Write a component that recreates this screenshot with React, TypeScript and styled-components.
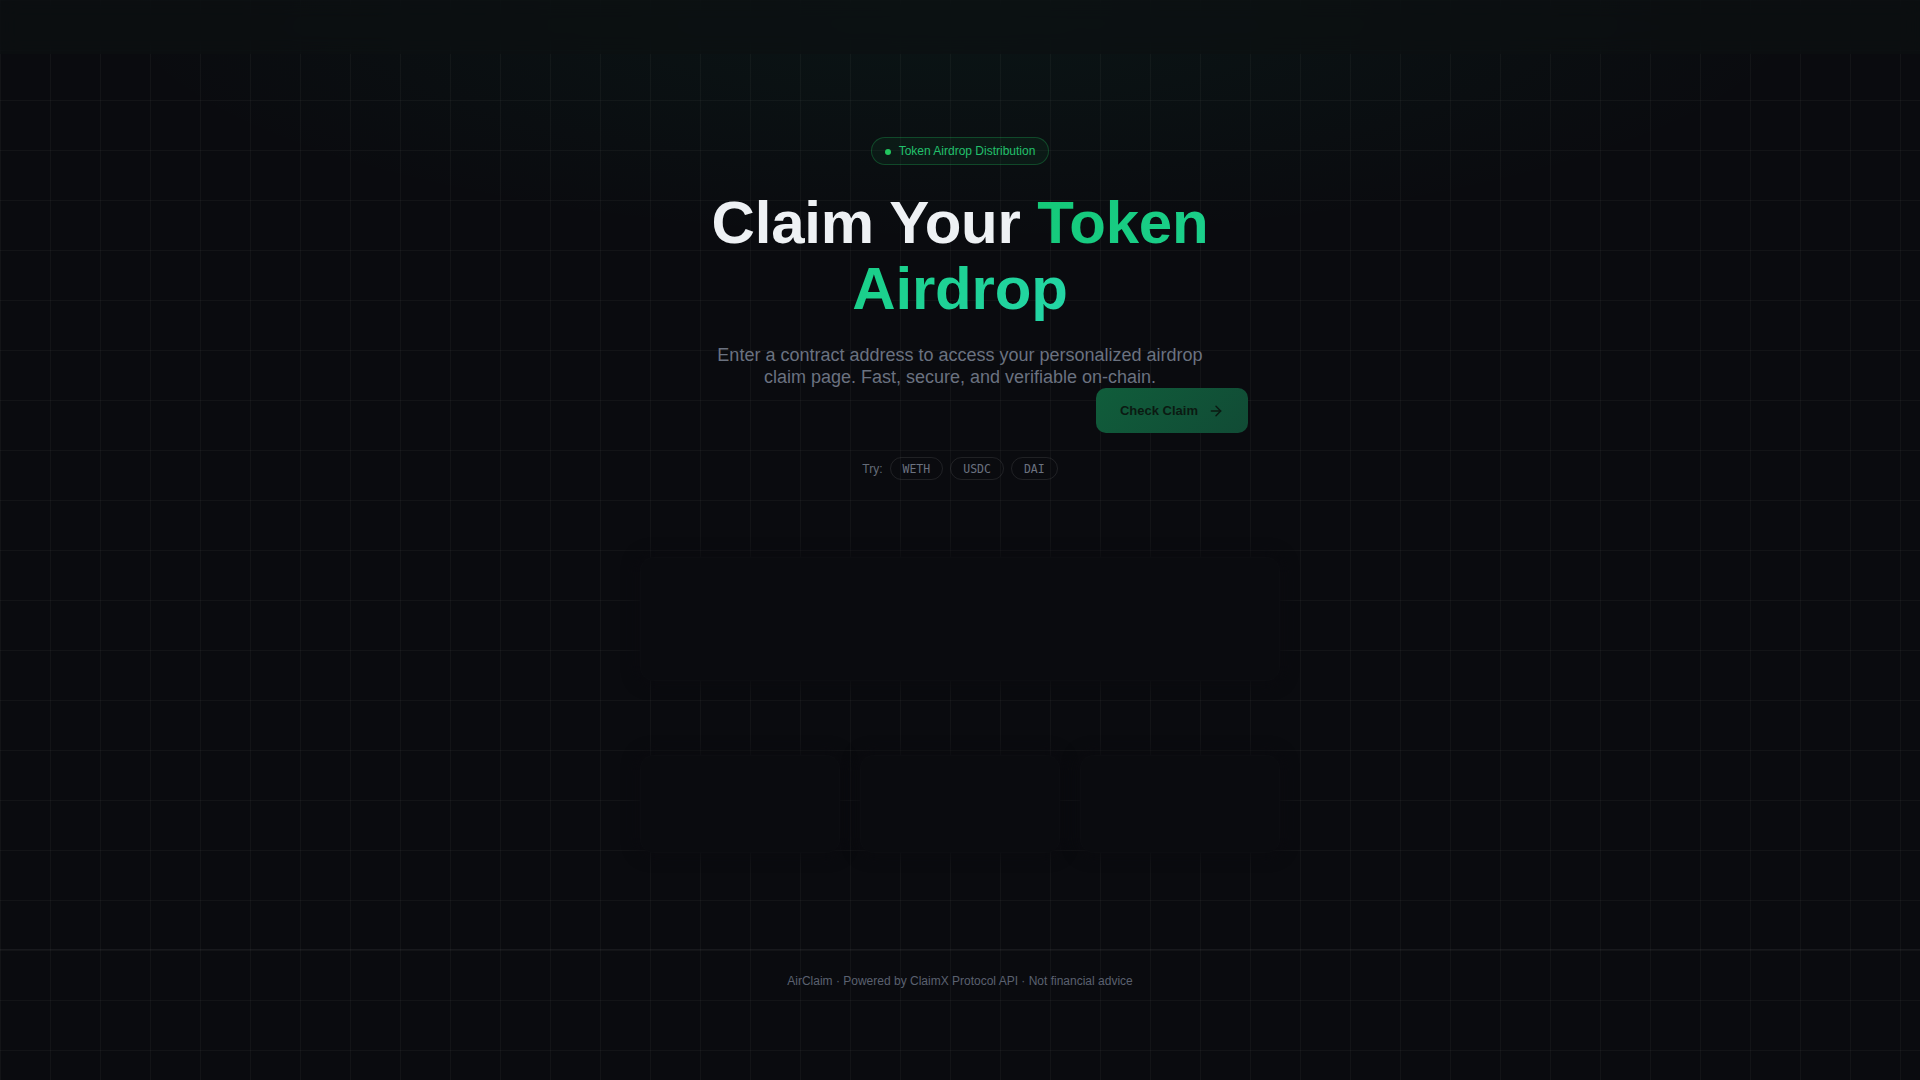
import React, { useState } from 'react'
import styled, { createGlobalStyle } from 'styled-components'
import { ArrowRight } from 'lucide-react'

const GlobalStyle = createGlobalStyle`
  html, body {
    margin: 0;
    padding: 0;
    background: #0a0b0f;
  }
  body {
    font-family: "Liberation Sans", Arial, sans-serif;
    color: #e8edf2;
  }
  * { box-sizing: border-box; }
`

const Page = styled.div`
  min-height: 100vh;
  background-color: #0a0b0f;
  background-image:
    radial-gradient(ellipse 60% 30% at 50% 0%, rgba(16, 185, 129, 0.06), transparent 75%),
    linear-gradient(rgba(255, 255, 255, 0.035) 1px, transparent 1px),
    linear-gradient(90deg, rgba(255, 255, 255, 0.035) 1px, transparent 1px);
  background-size: 100% 100%, 50px 50px, 50px 50px;
`

const TopBar = styled.header`
  height: 54px;
  background: rgba(11, 16, 17, 0.7);
  backdrop-filter: blur(10px);
`

const Main = styled.main`
  padding: 83px 0 96px;
`

const Hero = styled.section`
  display: flex;
  flex-direction: column;
  align-items: center;
  text-align: center;
`

const Badge = styled.div`
  display: inline-flex;
  align-items: center;
  gap: 8px;
  padding: 5px 13px 4px;
  line-height: 17px;
  border-radius: 999px;
  border: 1px solid rgba(34, 197, 94, 0.28);
  background: rgba(34, 197, 94, 0.06);
  color: #22c06c;
  font-size: 12px;
`

const Dot = styled.span`
  width: 6px;
  height: 6px;
  border-radius: 50%;
  background: #22c55e;
`

const Title = styled.h1`
  margin: 25px 0 0;
  font-size: 60px;
  line-height: 1.1;
  font-weight: 700;
  letter-spacing: -0.2px;
  color: #eef1f4;
`

const Accent = styled.span`
  background: linear-gradient(135deg, #14c877 0%, #1bd08c 50%, #24d6a8 100%);
  -webkit-background-clip: text;
  background-clip: text;
  color: transparent;
`

const Sub = styled.p`
  max-width: 500px;
  margin: 23px 0 0;
  font-size: 18px;
  line-height: 1.2;
  color: #6b7280;
`

const Form = styled.form`
  display: flex;
  align-items: center;
  gap: 12px;
  width: 576px;
`

const AddressInput = styled.input`
  flex: 1;
  min-width: 0;
  height: 45px;
  padding: 0 16px;
  border: none;
  outline: none;
  background: transparent;
  color: #e8edf2;
  font-family: "DejaVu Sans Mono", monospace;
  font-size: 14px;
`

const ClaimButton = styled.button<{ dim: boolean }>`
  display: inline-flex;
  align-items: center;
  gap: 10px;
  height: 45px;
  padding: 0 24px;
  border: none;
  border-radius: 10px;
  background: ${({ dim }) =>
    dim
      ? 'linear-gradient(135deg, #105d3b 0%, #114b35 100%)'
      : 'linear-gradient(135deg, #16c77a 0%, #12a36a 100%)'};
  color: #0b1a12;
  font-family: "Liberation Sans", Arial, sans-serif;
  font-size: 13px;
  font-weight: 700;
  cursor: pointer;
`

const TryRow = styled.div`
  display: flex;
  align-items: center;
  gap: 7px;
  margin-top: 24px;
`

const TryLabel = styled.span`
  font-size: 12px;
  color: #646b78;
`

const Chip = styled.button`
  height: 23px;
  padding: 0 12px;
  border-radius: 999px;
  border: 1px solid rgba(255, 255, 255, 0.09);
  background: transparent;
  color: #6b7280;
  font-family: "DejaVu Sans Mono", monospace;
  font-size: 11.5px;
  cursor: pointer;
`

const Cards = styled.section`
  width: 640px;
  margin: 77px auto 0;
  display: flex;
  flex-direction: column;
  gap: 74px;
`

const Card = styled.div<{ h: number }>`
  height: ${({ h }) => h}px;
  border-radius: 14px;
  background: #0a0b0f;
  border: 1px solid rgba(255, 255, 255, 0.012);
  box-shadow: 0 0 14px 4px rgba(10, 11, 15, 0.85);
`

const CardRow = styled.div`
  display: grid;
  grid-template-columns: repeat(3, 1fr);
  gap: 20px;
`

const Footer = styled.footer`
  border-top: 1px solid rgba(255, 255, 255, 0.06);
  padding: 22px 0;
  text-align: center;
  font-size: 12px;
  line-height: 18px;
  color: #5b6170;
`

const tokens = ['WETH', 'USDC', 'DAI']

export default function App() {
  const [address, setAddress] = useState('')

  return (
    <>
      <GlobalStyle />
      <Page>
        <TopBar />
        <Main>
          <Hero>
            <Badge>
              <Dot />
              Token Airdrop Distribution
            </Badge>
            <Title>
              Claim Your <Accent>Token<br />Airdrop</Accent>
            </Title>
            <Sub>
              Enter a contract address to access your personalized airdrop<br />claim page. Fast, secure, and verifiable on-chain.
            </Sub>
            <Form onSubmit={e => e.preventDefault()}>
              <AddressInput value={address} onChange={e => setAddress(e.target.value)} />
              <ClaimButton type="submit" dim={!address}>
                Check Claim
                <ArrowRight size={16} strokeWidth={2.2} />
              </ClaimButton>
            </Form>
            <TryRow>
              <TryLabel>Try:</TryLabel>
              {tokens.map(t => (
                <Chip key={t} type="button" onClick={() => setAddress(t)}>{t}</Chip>
              ))}
            </TryRow>
          </Hero>
          <Cards>
            <Card h={124} />
            <CardRow>
              <Card h={98} />
              <Card h={98} />
              <Card h={98} />
            </CardRow>
          </Cards>
        </Main>
        <Footer>AirClaim · Powered by ClaimX Protocol API · Not financial advice</Footer>
      </Page>
    </>
  )
}
